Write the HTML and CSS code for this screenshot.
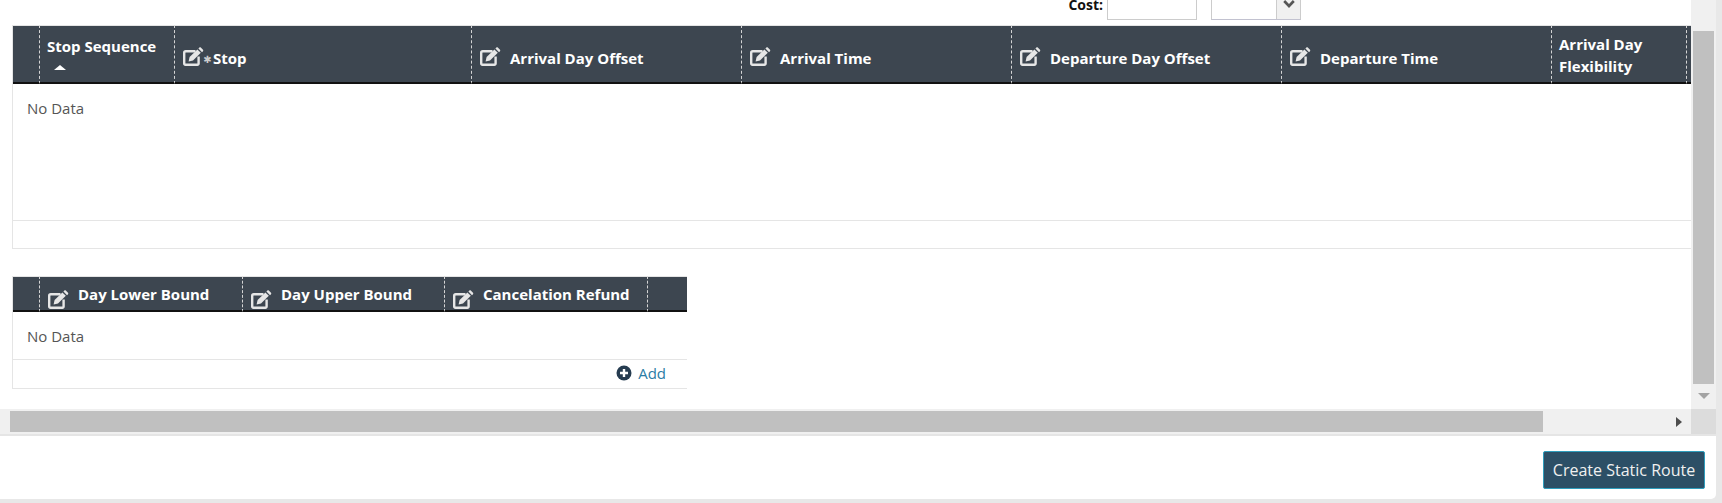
FILE: index.html
```html
<!DOCTYPE html>
<html lang="en">
<head>
    <meta charset="UTF-8">
    <title>Create Static Route</title>
    <link rel="stylesheet" href="styles.css">
</head>
<body>
<svg class="defs" width="0" height="0">
    <symbol id="edit" viewBox="0 0 21 19">
        <path d="M12.5 4.2H2.8A1.6 1.6 0 0 0 1.2 5.8v10.8a1.2 1.2 0 0 0 1.2 1.2h12a1.2 1.2 0 0 0 1.2-1.2V9.6" fill="none" stroke="currentColor" stroke-width="2.4"/>
        <path d="M5.6 14.4l1-4.4 7.8-7.6 3.4 3.4-7.8 7.6z" fill="currentColor"/>
        <path d="M15.4 1.6l1-1c.4-.4 1-.4 1.4 0l2.2 2.2c.4.4.4 1 0 1.4l-1 1z" fill="currentColor"/>
    </symbol>
</svg>
<div class="card">
    <div class="main">
        <div class="content">
            <div class="cost-row">
                <label class="cost-label">Cost:</label>
                <input class="cost-input" type="text">
                <div class="cost-select">
                    <div class="cost-arrow">
                        <svg width="12" height="8" viewBox="0 0 12 8"><path d="M1.2 1L6 6l4.8-5" fill="none" stroke="#555" stroke-width="2.6"/></svg>
                    </div>
                </div>
            </div>

            <table class="grid grid-stops">
                <colgroup>
                    <col class="c27"><col class="c135"><col class="c297"><col class="c270"><col class="c270"><col class="c270"><col class="c270"><col class="c135"><col>
                </colgroup>
                <tr class="head-row">
                    <th></th>
                    <th class="th-sort">
                        <div>Stop Sequence</div>
                        <div class="sort-up"></div>
                    </th>
                    <th><div class="head-cell"><svg class="edit-icon"><use href="#edit"/></svg><span class="req">✱</span><span>Stop</span></div></th>
                    <th><div class="head-cell"><svg class="edit-icon"><use href="#edit"/></svg><span>Arrival Day Offset</span></div></th>
                    <th><div class="head-cell"><svg class="edit-icon"><use href="#edit"/></svg><span>Arrival Time</span></div></th>
                    <th><div class="head-cell"><svg class="edit-icon"><use href="#edit"/></svg><span>Departure Day Offset</span></div></th>
                    <th><div class="head-cell"><svg class="edit-icon"><use href="#edit"/></svg><span>Departure Time</span></div></th>
                    <th class="th-wrap">Arrival Day Flexibility</th>
                    <th class="th-end"></th>
                </tr>
                <tr class="body-row">
                    <td colspan="9">No Data</td>
                </tr>
                <tr class="foot-row">
                    <td colspan="9"></td>
                </tr>
            </table>

            <table class="grid grid-refund">
                <colgroup>
                    <col class="c27"><col class="c203"><col class="c202"><col class="c203"><col>
                </colgroup>
                <tr class="head-row">
                    <th></th>
                    <th><div class="head-cell"><svg class="edit-icon"><use href="#edit"/></svg><span>Day Lower Bound</span></div></th>
                    <th><div class="head-cell"><svg class="edit-icon"><use href="#edit"/></svg><span>Day Upper Bound</span></div></th>
                    <th><div class="head-cell"><svg class="edit-icon"><use href="#edit"/></svg><span>Cancelation Refund</span></div></th>
                    <th class="th-end"></th>
                </tr>
                <tr class="body-row">
                    <td colspan="5">No Data</td>
                </tr>
                <tr class="foot-row">
                    <td colspan="5">
                        <a class="add-link" href="#">
                            <svg width="16" height="16" viewBox="0 0 16 16"><circle cx="8" cy="8" r="7.5" fill="#263c50"/><path d="M8 4v8M4 8h8" stroke="#fff" stroke-width="2.4"/></svg>
                            <span>Add</span>
                        </a>
                    </td>
                </tr>
            </table>
        </div>
        <div class="vbar">
            <div class="vthumb"></div>
            <div class="arrow-down"></div>
        </div>
    </div>
    <div class="hbar">
        <div class="htrack">
            <div class="hthumb"></div>
            <div class="arrow-right"></div>
        </div>
        <div class="corner"></div>
    </div>
    <div class="actions">
        <button class="btn-create">Create Static Route</button>
    </div>
</div>
</body>
</html>
```
FILE: styles.css
```css
*{
    margin:0;
    padding:0;
    box-sizing:border-box;
}
html,body{
    height:503px;
    overflow:hidden;
}
body{
    background-color:#e8e8e8;
    font-family:"Open Sans",sans-serif;
    font-size:15px;
    color:#555;
}
.defs{
    display:block;
    height:0;
}
.card{
    width:1716px;
    height:499px;
    background-color:#fff;
    border-bottom-right-radius:5px;
    display:flex;
    flex-direction:column;
}
.main{
    height:409px;
    display:flex;
}
.content{
    width:1691px;
    padding-left:12px;
    overflow:hidden;
}

/* cost row, cut off by the scroll position */
.cost-row{
    height:20px;
    margin-bottom:5px;
    padding-right:390px;
    display:flex;
    justify-content:flex-end;
    align-items:flex-end;
    overflow:hidden;
}
.cost-label{
    font-size:14px;
    font-weight:700;
    line-height:10px;
    padding-bottom:10px;
    color:#111;
}
.cost-input{
    width:90px;
    height:30px;
    margin-left:4px;
    border:1px solid #ccc;
    background-color:#fff;
}
.cost-select{
    width:90px;
    height:30px;
    margin-left:14px;
    border:1px solid #ccc;
    border-bottom-color:#c2c2d0;
    display:flex;
    justify-content:flex-end;
}
.cost-arrow{
    width:24px;
    background-color:#f0f0f0;
    border-left:1px solid #ccc;
    padding-top:9px;
}
.cost-arrow svg{
    display:block;
    margin:0 auto;
}

/* tables */
.grid{
    table-layout:fixed;
    border-collapse:separate;
    border-spacing:0;
    border-left:1px solid #e5e5e5;
}
.grid-stops{
    width:1679px;
}
.grid-refund{
    width:675px;
    margin-top:27px;
}
.c27{ width:27px; }
.c135{ width:135px; }
.c202{ width:202px; }
.c203{ width:203px; }
.c270{ width:270px; }
.c297{ width:297px; }
.head-row th{
    background-color:#3d4650;
    color:#fff;
    font-size:15px;
    font-weight:700;
    line-height:22px;
    text-align:left;
    padding:0 6px 0 7px;
    border-top:1px solid #e5e5e5;
    border-bottom:2px solid #111;
    border-right:1px dashed #d5d5d5;
}
.head-row .th-end{
    border-right:none;
    padding:0;
}
.grid-stops .head-row{
    height:59px;
}
.grid-refund .head-row{
    height:36px;
}
.th-wrap{
    padding-top:2px !important;
}
.head-cell{
    display:flex;
    align-items:center;
    padding:5px 0 0 1px;
}
.head-cell span{
    margin-top:2px;
}
.edit-icon{
    width:21px;
    height:19px;
    margin-right:9px;
    color:#e6e6e6;
    flex-shrink:0;
}
.req{
    width:9px;
    margin-left:-10px;
    margin-right:1px;
    font-family:"DejaVu Sans",sans-serif;
    font-size:10px;
    font-weight:400;
    text-align:center;
    color:#ccc;
}
.head-cell .req{
    margin-top:6px;
}
.grid-refund .head-cell{
    padding-top:0;
}
.grid-refund .edit-icon{
    margin-top:12px;
}
.grid-refund .head-cell span{
    margin-top:0;
}
.th-sort{
    vertical-align:top;
    padding-top:9px !important;
}
.sort-up{
    width:0;
    height:0;
    margin:8px 0 0 7px;
    border-left:6px solid transparent;
    border-right:6px solid transparent;
    border-bottom:5px solid #fff;
}
.body-row td{
    padding:14px 14px;
    line-height:20px;
    border-bottom:1px solid #e5e5e5;
    vertical-align:top;
}
.grid-stops .body-row{
    height:137px;
}
.grid-refund .body-row{
    height:48px;
}
.grid-refund .body-row td{
    padding-top:14px;
    padding-bottom:13px;
}
.foot-row td{
    height:28px;
    border-bottom:1px solid #e5e5e5;
}
.grid-refund .foot-row td{
    height:29px;
    padding-right:21px;
    text-align:right;
}
.add-link{
    display:inline-flex;
    align-items:center;
    gap:6px;
    color:#2a7da6;
    text-decoration:none;
    line-height:20px;
}

/* fake scrollbars */
.vbar{
    width:25px;
    background-color:#f0f0f0;
    padding:31px 2px 0;
}
.vthumb{
    height:353px;
    background-color:#c0c0c0;
}
.arrow-down{
    width:0;
    height:0;
    margin:9px auto 0;
    border-left:6px solid transparent;
    border-right:6px solid transparent;
    border-top:6px solid #a3a3a3;
}
.hbar{
    height:25px;
    display:flex;
}
.htrack{
    width:1691px;
    background-color:#f0f0f0;
    padding:2px 9px 2px 10px;
    display:flex;
    align-items:center;
    justify-content:space-between;
}
.hthumb{
    width:1533px;
    height:21px;
    background-color:#c0c0c0;
}
.arrow-right{
    width:0;
    height:0;
    border-top:5px solid transparent;
    border-bottom:5px solid transparent;
    border-left:6px solid #4d4d4d;
}
.corner{
    width:25px;
    background-color:#dcdcdc;
}
.actions{
    flex:1;
    border-top:2px solid #e5e5e5;
    padding:15px 11px 0 0;
    display:flex;
    justify-content:flex-end;
    align-items:flex-start;
}
.btn-create{
    width:162px;
    height:38px;
    background-color:#2c4f66;
    color:#f0f0f0;
    border:1px solid #2e9dbd;
    border-radius:2px;
    font-family:"Open Sans",sans-serif;
    font-size:16px;
}
```
